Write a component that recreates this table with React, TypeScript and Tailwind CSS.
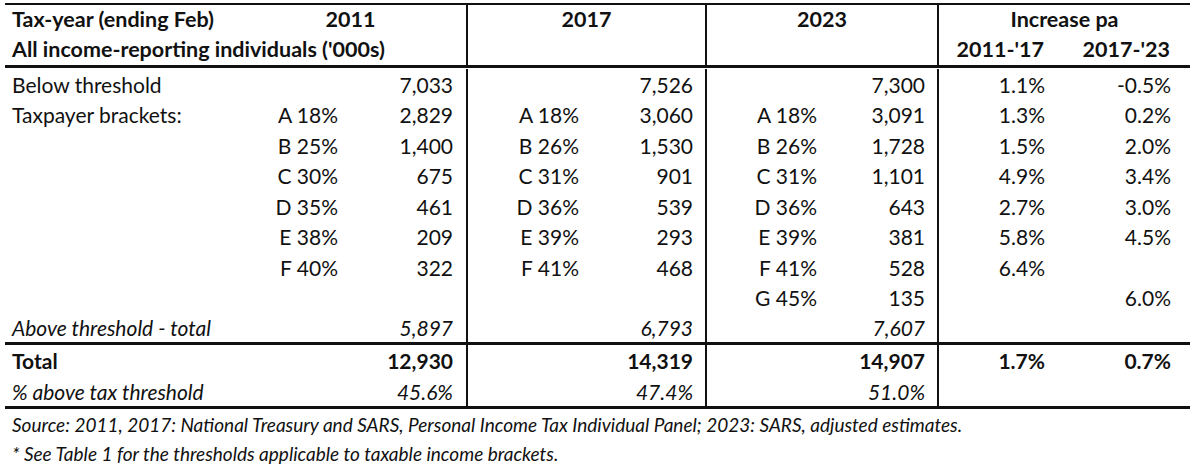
const cols =
  "grid grid-cols-[245px_95px_123px_120px_119px_118px_114px_121px_130px]";

type Row = {
  label: string;
  b11?: string;
  v11?: string;
  b17?: string;
  v17?: string;
  b23?: string;
  v23?: string;
  i1?: string;
  i2?: string;
};

const rows: Row[] = [
  { label: "Below threshold", v11: "7,033", v17: "7,526", v23: "7,300", i1: "1.1%", i2: "-0.5%" },
  { label: "Taxpayer brackets:", b11: "A 18%", v11: "2,829", b17: "A 18%", v17: "3,060", b23: "A 18%", v23: "3,091", i1: "1.3%", i2: "0.2%" },
  { label: "", b11: "B 25%", v11: "1,400", b17: "B 26%", v17: "1,530", b23: "B 26%", v23: "1,728", i1: "1.5%", i2: "2.0%" },
  { label: "", b11: "C 30%", v11: "675", b17: "C 31%", v17: "901", b23: "C 31%", v23: "1,101", i1: "4.9%", i2: "3.4%" },
  { label: "", b11: "D 35%", v11: "461", b17: "D 36%", v17: "539", b23: "D 36%", v23: "643", i1: "2.7%", i2: "3.0%" },
  { label: "", b11: "E 38%", v11: "209", b17: "E 39%", v17: "293", b23: "E 39%", v23: "381", i1: "5.8%", i2: "4.5%" },
  { label: "", b11: "F 40%", v11: "322", b17: "F 41%", v17: "468", b23: "F 41%", v23: "528", i1: "6.4%" },
  { label: "", b23: "G 45%", v23: "135", i2: "6.0%" },
];

function DataRow({ r, h = "h-[30.5px]", extra = "" }: { r: Row; h?: string; extra?: string }) {
  return (
    <div className={`${cols} ${h} items-center ${extra}`}>
      <div className="pl-[7px] whitespace-nowrap">{r.label}</div>
      <div className="text-right pr-[7px] whitespace-nowrap">{r.b11}</div>
      <div className="text-right pr-[13px] h-full flex items-center justify-end border-r-2 border-[#111]">{r.v11}</div>
      <div className="text-right pr-[9px] whitespace-nowrap">{r.b17}</div>
      <div className="text-right pr-[12px] h-full flex items-center justify-end border-r-2 border-[#111]">{r.v17}</div>
      <div className="text-right pr-[8px] whitespace-nowrap">{r.b23}</div>
      <div className="text-right pr-[12px] h-full flex items-center justify-end border-r-2 border-[#111]">{r.v23}</div>
      <div className="text-right pr-[15px]">{r.i1}</div>
      <div className="text-right pr-[19px]">{r.i2}</div>
    </div>
  );
}

export default function App() {
  return (
    <div
      className="w-[1200px] h-[468px] bg-white text-[#111] text-[21px] leading-none overflow-hidden pt-[3px]"
      style={{ fontFamily: "Lato, 'Open Sans', sans-serif" }}
    >
      <div className="ml-[5px] w-[1185px]">
        <div className="h-[2px] bg-[#111]" />
        {/* header */}
        <div className={`${cols} h-[30px] items-center font-bold text-[21.5px]`}>
          <div className="pl-[7px] whitespace-nowrap">Tax-year (ending Feb)</div>
          <div className="col-span-2 h-full flex items-center justify-center pr-[15px] border-r-2 border-[#111]">2011</div>
          <div className="col-span-2 h-full flex items-center justify-center border-r-2 border-[#111]">2017</div>
          <div className="col-span-2 h-full flex items-center justify-center border-r-2 border-[#111]">2023</div>
          <div className="col-span-2 text-center">Increase pa</div>
        </div>
        <div className={`${cols} h-[30px] items-center font-bold text-[21.5px]`}>
          <div className="col-span-3 h-full flex items-center pl-[7px] whitespace-nowrap border-r-2 border-[#111]">
            All income-reporting individuals ('000s)
          </div>
          <div className="col-span-2 h-full border-r-2 border-[#111]" />
          <div className="col-span-2 h-full border-r-2 border-[#111]" />
          <div className="text-right pr-[16px] whitespace-nowrap">2011-'17</div>
          <div className="text-right pr-[20px] whitespace-nowrap">2017-'23</div>
        </div>
        <div className="h-[3px] bg-[#111]" />
        <div className="pt-[1px]">
          {rows.map((r, i) => (
            <DataRow key={i} r={r} />
          ))}
          <DataRow
            r={{ label: "Above threshold - total", v11: "5,897", v17: "6,793", v23: "7,607" }}
            h="h-[29px]"
            extra="italic"
          />
        </div>
        <div className="h-[3px] bg-[#111]" />
        <DataRow
          r={{ label: "Total", v11: "12,930", v17: "14,319", v23: "14,907", i1: "1.7%", i2: "0.7%" }}
          h="h-[31px]"
          extra="font-bold"
        />
        <DataRow
          r={{ label: "% above tax threshold", v11: "45.6%", v17: "47.4%", v23: "51.0%" }}
          h="h-[30px]"
          extra="italic"
        />
        <div className="h-[3px] bg-[#111]" />
        <div className="pl-[7px] italic text-[19px] h-[30px] flex items-center whitespace-nowrap">
          Source: 2011, 2017: National Treasury and SARS, Personal Income Tax Individual Panel; 2023: SARS, adjusted estimates.
        </div>
        <div className="pl-[7px] italic text-[19px] h-[29px] flex items-center whitespace-nowrap">
          * See Table 1 for the thresholds applicable to taxable income brackets.
        </div>
      </div>
    </div>
  );
}
